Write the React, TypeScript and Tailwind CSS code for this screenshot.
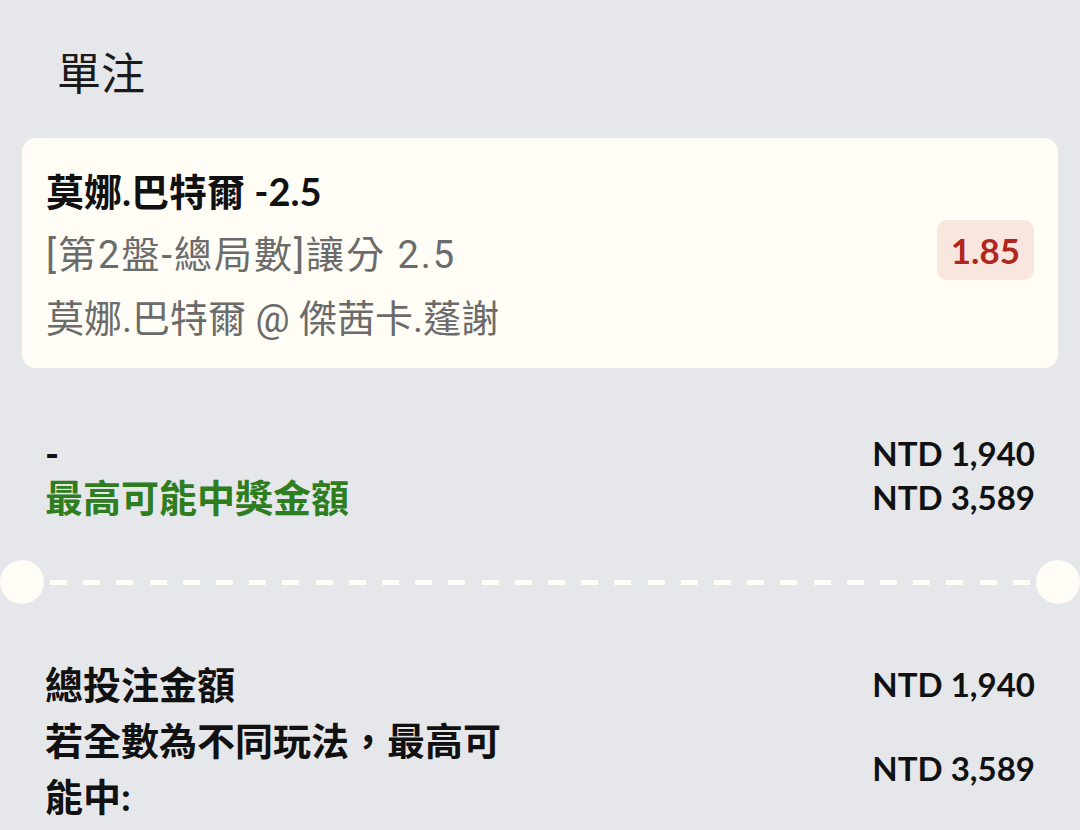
import React from "react";

const latin = "font-['Lato','Noto_Sans_CJK_TC',sans-serif]";
const sys = "font-['Roboto','Noto_Sans_CJK_TC',sans-serif]";

function Amount({ value }: { value: string }) {
  return <div className={`${latin} text-[33px] font-bold text-[#111]`}>NTD {value}</div>;
}

function Separator() {
  const dashes = Array.from({ length: 30 });
  return (
    <div className="mt-[41px] flex h-[44px] items-center">
      <div className="h-[44px] w-[44px] shrink-0 rounded-full bg-[#fffdf5]" />
      <div className="mx-[6px] flex flex-1 items-center justify-between">
        {dashes.map((_, i) => (
          <div key={i} className="h-[5px] w-[17px] bg-[#fffdf5]" />
        ))}
      </div>
      <div className="h-[44px] w-[44px] shrink-0 rounded-full bg-[#fffdf5]" />
    </div>
  );
}

export default function App() {
  return (
    <div className={`${latin} min-h-[830px] w-full overflow-hidden bg-[#e5e7ea] text-[#111]`}>
      <div className="pl-[57px] pt-[44px] text-[44px] leading-[58px] text-[#1a1a1a]">單注</div>

      <div className="mx-[22px] mt-[36px] flex items-center justify-between rounded-[14px] bg-[#fffdf5] px-[24px] pb-[17px] pt-[21px]">
        <div className="leading-[64px]">
          <div className="text-[38px] font-bold text-[#111]">莫娜.巴特爾 -2.5</div>
          <div className={`${sys} text-[38px] tracking-[2px] text-[#6b6b6b]`}>[第2盤-總局數]讓分 2.5</div>
          <div className={`${sys} text-[38px] text-[#6b6b6b]`}>莫娜.巴特爾 @ 傑茜卡.蓬謝</div>
        </div>
        <div className="-mt-[10px] rounded-[10px] bg-[#f8e6df] px-[14px] py-[9px] text-[35px] font-bold leading-[42px] text-[#b3261e]">
          1.85
        </div>
      </div>

      <div className="mt-[63px] px-[45px] leading-[44px]">
        <div className="flex items-center justify-between">
          <div className="text-[38px] font-bold">-</div>
          <Amount value="1,940" />
        </div>
        <div className="flex items-center justify-between">
          <div className="text-[38px] font-bold text-[#2e7d1f]">最高可能中獎金額</div>
          <Amount value="3,589" />
        </div>
      </div>

      <Separator />

      <div className="mt-[52px] px-[45px] leading-[56px]">
        <div className="flex items-center justify-between">
          <div className="text-[38px] font-bold">總投注金額</div>
          <Amount value="1,940" />
        </div>
        <div className="flex items-center justify-between">
          <div className="w-[480px] text-[38px] font-bold">若全數為不同玩法，最高可能中:</div>
          <Amount value="3,589" />
        </div>
      </div>
    </div>
  );
}
